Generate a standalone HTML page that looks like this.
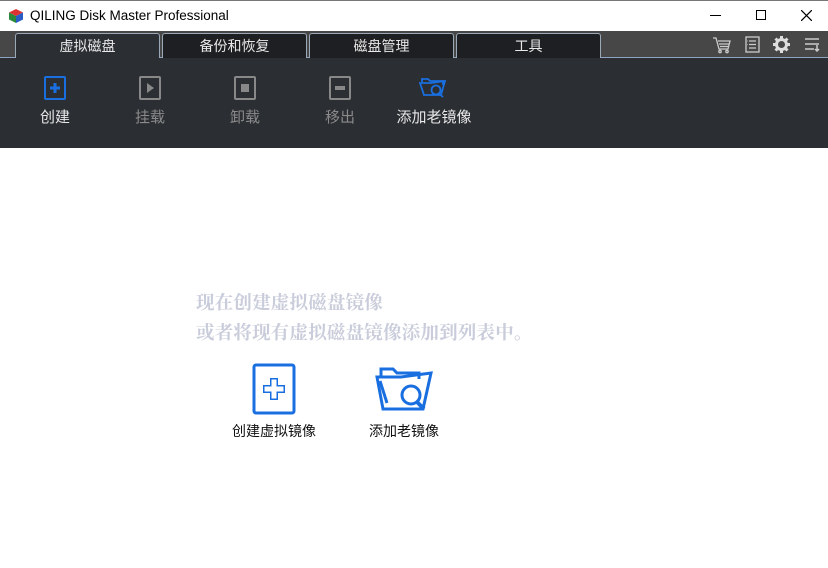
<!DOCTYPE html>
<html><head><meta charset="utf-8"><style>
*{margin:0;padding:0;box-sizing:border-box}
body{width:828px;height:568px;background:#fff;font-family:"Liberation Sans","Noto Sans CJK SC",sans-serif;position:relative;overflow:hidden}
.abs{position:absolute}
#title{top:0;left:0;width:828px;height:31px;background:#fff;border-top:1px solid #777}
#tabs{top:31px;left:0;width:828px;height:27px;background:#474747;border-bottom:1px solid #8ea4c0}
.tab{position:absolute;top:2px;height:26px;border:1px solid #9aa8b8;border-bottom:none;border-radius:3px 3px 0 0;background:#1e1f22;color:#e8e8e8;font-size:14px;text-align:center;line-height:24px}
.tab.act{background:#2b2e33;height:27px}
#tool{top:58px;left:0;width:828px;height:90px;background:#2b2e33}
.tb{position:absolute;top:18px;width:90px;text-align:center;font-size:15px}
.tb svg{display:block;margin:0 auto 6px}
.msg{left:196px;font-family:"Noto Serif CJK SC","Liberation Serif",serif;font-weight:bold;font-size:18.5px;color:#c9ccda;letter-spacing:0.2px}
.big{position:absolute;text-align:center;font-size:14px;color:#111}
</style></head><body>
<div id="title" class="abs">
<svg class="abs" style="left:8px;top:7px" width="16" height="16" viewBox="0 0 16 16"><path d="M8 1L15 4.5 8 8 1 4.5z" fill="#d33"/><path d="M1 4.5L8 8V15L1 11.5z" fill="#2a8a3a"/><path d="M15 4.5L8 8V15L15 11.5z" fill="#2a5cc8"/></svg>
<div class="abs" style="left:30px;top:7px;font-size:13.5px;color:#000">QILING Disk Master Professional</div>
<div class="abs" style="left:710px;top:14px;width:11px;height:1px;background:#000"></div>
<div class="abs" style="left:756px;top:9px;width:10px;height:10px;border:1px solid #000"></div>
<svg class="abs" style="left:801px;top:9px" width="11" height="11"><path d="M0 0L11 11M11 0L0 11" stroke="#000" stroke-width="1.2"/></svg>
</div>
<div id="tabs" class="abs">
<div class="tab act" style="left:15px;width:145px">虚拟磁盘</div>
<div class="tab" style="left:162px;width:145px">备份和恢复</div>
<div class="tab" style="left:309px;width:145px">磁盘管理</div>
<div class="tab" style="left:456px;width:145px">工具</div>
<svg class="abs" style="left:712px;top:5px" width="20" height="18" viewBox="0 0 20 18" fill="none" stroke="#ccc" stroke-width="1.3"><path d="M1 2H4L7 13H16L18 5H6"/><path d="M7 8H17M8 10.5H16"/><circle cx="8" cy="15.5" r="1.2"/><circle cx="15" cy="15.5" r="1.2"/></svg>
<svg class="abs" style="left:745px;top:5px" width="15" height="17" viewBox="0 0 15 17" fill="none" stroke="#ccc" stroke-width="1.3"><rect x="1" y="1" width="13" height="15"/><path d="M4 5H11M4 8.5H11M4 12H11M2.5 5H3M2.5 8.5H3"/></svg>
<svg class="abs" style="left:773px;top:5px" width="17" height="17" viewBox="0 0 17 17"><circle cx="8.5" cy="8.5" r="5" fill="none" stroke="#ddd" stroke-width="3"/><g stroke="#ddd" stroke-width="3"><path d="M8.5 0V3M8.5 14V17M0 8.5H3M14 8.5H17M2.5 2.5L4.5 4.5M12.5 12.5L14.5 14.5M2.5 14.5L4.5 12.5M12.5 4.5L14.5 2.5"/></g></svg>
<svg class="abs" style="left:804px;top:6px" width="16" height="15" viewBox="0 0 16 15" stroke="#ccc" stroke-width="1.5" fill="none"><path d="M1 2H15M1 7H15M1 12H10M13 8V14M11 12L13 14L15 12"/></svg>
</div>
<div id="tool" class="abs">
<div class="tb" style="left:10px;color:#e8e8e8"><svg width="22" height="24" viewBox="0 0 22 24"><rect x="1" y="1" width="20" height="22" rx="1" fill="none" stroke="#1a6fe0" stroke-width="2"/><path d="M11 7V17M6 12H16" stroke="#1a6fe0" stroke-width="3"/></svg>创建</div>
<div class="tb" style="left:105px;color:#8a8a8a"><svg width="22" height="24" viewBox="0 0 22 24"><rect x="1" y="1" width="20" height="22" rx="1" fill="none" stroke="#888" stroke-width="2"/><path d="M8 7L15 12L8 17z" fill="#888"/></svg>挂载</div>
<div class="tb" style="left:200px;color:#8a8a8a"><svg width="22" height="24" viewBox="0 0 22 24"><rect x="1" y="1" width="20" height="22" rx="1" fill="none" stroke="#888" stroke-width="2"/><rect x="7" y="8" width="8" height="8" fill="#888"/></svg>卸载</div>
<div class="tb" style="left:295px;color:#8a8a8a"><svg width="22" height="24" viewBox="0 0 22 24"><rect x="1" y="1" width="20" height="22" rx="1" fill="none" stroke="#888" stroke-width="2"/><rect x="6" y="10" width="10" height="4" fill="#888"/></svg>移出</div>
<div class="tb" style="left:389px;color:#e8e8e8"><svg width="30" height="24" viewBox="0 0 30 24" fill="none" stroke="#1a6fe0" stroke-width="1.8"><path d="M3 6V3H9L11 5H24V9"/><path d="M1 7H12L26 5L22 19H5z"/><circle cx="17" cy="14" r="4.5"/><path d="M20 17.5L24 21"/></svg>添加老镜像</div>
</div>
<div class="abs msg" style="top:289px">现在创建虚拟磁盘镜像</div>
<div class="abs msg" style="top:319px">或者将现有虚拟磁盘镜像添加到列表中。</div>
<div class="big" style="left:224px;top:363px;width:100px"><svg width="44" height="52" viewBox="0 0 44 52" style="display:block;margin:0 auto 6px"><rect x="2" y="2" width="40" height="48" rx="2" fill="none" stroke="#1a6fe0" stroke-width="3"/><path d="M22 15V37M11 26H33" stroke="#1a6fe0" stroke-width="8"/><path d="M22 16.5V35.5M12.5 26H31.5" stroke="#fff" stroke-width="5"/></svg>创建虚拟镜像</div>
<div class="big" style="left:354px;top:363px;width:100px"><svg width="58" height="52" viewBox="0 0 58 52" fill="none" stroke="#1a6fe0" stroke-width="3" style="display:block;margin:0 auto 6px"><path d="M6 14V6H18L22 10H44V16"/><path d="M2 14H26L56 10L48 46H8z"/><path d="M5 18L12 40"/><circle cx="36" cy="32" r="9"/><path d="M42 39L49 46" stroke-width="4"/></svg>添加老镜像</div>
</body></html>
